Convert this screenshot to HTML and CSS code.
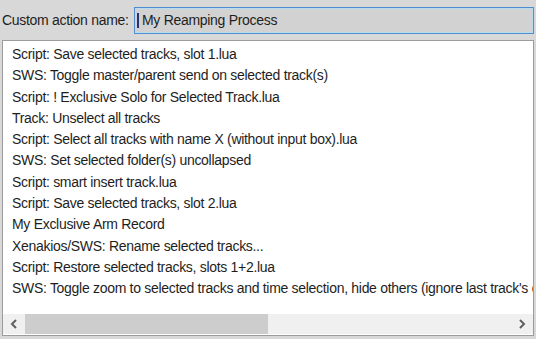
FILE: index.html
```html
<html>
    <head>
        <title>Custom Action</title>
        <link rel="stylesheet" href="styles.css">
    </head>
    <body>
        <div class="namerow">
            <label class="lbl">Custom action name:</label>
            <div class="namebox"><span class="caret"></span>My Reamping Process</div>
        </div>

        <div class="list">
            <div class="items">
                <div class="item">Script: Save selected tracks, slot 1.lua</div>
                <div class="item">SWS: Toggle master/parent send on selected track(s)</div>
                <div class="item">Script: ! Exclusive Solo for Selected Track.lua</div>
                <div class="item">Track: Unselect all tracks</div>
                <div class="item">Script: Select all tracks with name X (without input box).lua</div>
                <div class="item">SWS: Set selected folder(s) uncollapsed</div>
                <div class="item">Script: smart insert track.lua</div>
                <div class="item">Script: Save selected tracks, slot 2.lua</div>
                <div class="item">My Exclusive Arm Record</div>
                <div class="item">Xenakios/SWS: Rename selected tracks...</div>
                <div class="item">Script: Restore selected tracks, slots 1+2.lua</div>
                <div class="item">SWS: Toggle zoom to selected tracks and time selection, hide others (ignore last track's envelopes)</div>
            </div>
            <!-- horizontal scrollbar -->
            <div class="hscroll">
                <div class="arrow">
                    <svg width="8" height="10" viewBox="0 0 8 10"><path d="M6 1 L2 5 L6 9" fill="none" stroke="#606060" stroke-width="2"/></svg>
                </div>
                <div class="thumb"></div>
                <div class="track"></div>
                <div class="arrow">
                    <svg width="8" height="10" viewBox="0 0 8 10"><path d="M2 1 L6 5 L2 9" fill="none" stroke="#606060" stroke-width="2"/></svg>
                </div>
            </div>
        </div>
    </body>
</html>
```

FILE: styles.css
```css
* {
    box-sizing: border-box;
}
body {
    margin: 0;
    background-color: #d8d8d8;
    font-family: "Liberation Sans", Arial, sans-serif;
    font-size: 14px;
    letter-spacing: -0.3px;
    color: #1e1e1e;
    height: 339px;
    overflow: hidden;
}

/*top row*/
.namerow {
    display: flex;
    align-items: center;
    padding: 6px 2px 0 2px;
    height: 34px;
}
.lbl {
    width: 132px;
}
.namebox {
    flex: 1;
    height: 27px;
    display: flex;
    align-items: center;
    padding-left: 2px;
    background-color: #d2d2d2;
    border: 1px solid #4f8fcf;
    box-shadow: inset 0 0 0 1px #b9dcef;
}
.caret {
    width: 2px;
    height: 15px;
    background-color: #22337a;
    margin-right: 3px;
}

/*list*/
.list {
    margin: 6px 2px 0 2px;
    height: 296px;
    background-color: #ffffff;
    border: 1px solid #9c9c9c;
    display: flex;
    flex-direction: column;
}
.items {
    flex: 1;
    overflow: hidden;
    padding-top: 3px;
    padding-left: 9px;
}
.item {
    white-space: nowrap;
    line-height: 21.3px;
}

.hscroll {
    display: flex;
    height: 20px;
    margin-bottom: 1px;
    background-color: #f0f0f0;
}
.arrow {
    width: 22px;
    display: flex;
    align-items: center;
    justify-content: center;
}
.thumb {
    width: 243px;
    background-color: #cdcdcd;
}
.track {
    flex: 1;
}
```
